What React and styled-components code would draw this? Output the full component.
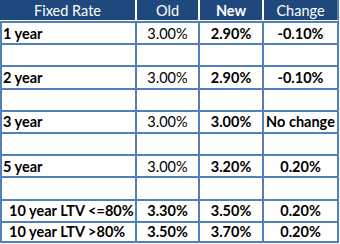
import React from "react";
import styled, { createGlobalStyle } from "styled-components";

const GlobalStyle = createGlobalStyle`
  html, body {
    margin: 0;
    padding: 0;
    background: #ffffff;
  }
  body {
    font-family: Lato, "Open Sans", "Liberation Sans", sans-serif;
  }
`;

const NAVY = "#1F497D";
const LINE = "#4F81BD";

const Table = styled.div`
  display: grid;
  grid-template-columns: 137px 63px 64px 75px;
  grid-template-rows: 21px repeat(10, 22.2px);
  width: 339px;
  font-size: 14.5px;
`;

const HeadCell = styled.div`
  box-sizing: border-box;
  display: flex;
  align-items: center;
  justify-content: center;
  padding-top: 1px;
  background: ${NAVY};
  color: #ffffff;
  font-weight: ${(p) => (p.$bold ? 700 : 400)};
  border-right: 2px solid ${(p) => (p.$last ? LINE : "#ffffff")};
  border-bottom: 1px solid #ffffff;
  white-space: nowrap;
`;

const Cell = styled.div`
  box-sizing: border-box;
  display: flex;
  align-items: center;
  justify-content: ${(p) => (p.$left ? "flex-start" : "center")};
  padding-left: ${(p) => (p.$left ? `${p.$indent || 1}px` : "0")};
  border-top: 2px solid ${LINE};
  border-right: 2px solid ${LINE};
  border-left: ${(p) => (p.$left ? `2px solid ${LINE}` : "none")};
  border-bottom: ${(p) => (p.$end ? `2px solid ${LINE}` : "none")};
  color: #000000;
  font-weight: ${(p) => (p.$regular ? 400 : 700)};
  white-space: nowrap;
  overflow: hidden;
`;

const headers = [
  { label: "Fixed Rate" },
  { label: "Old" },
  { label: "New", bold: true },
  { label: "Change", last: true },
];

// old column regular unless marked bold
const rows = [
  { term: "1 year", old: "3.00%", nw: "2.90%", change: "-0.10%" },
  { term: "", old: "", nw: "", change: "" },
  { term: "2 year", old: "3.00%", nw: "2.90%", change: "-0.10%" },
  { term: "", old: "", nw: "", change: "" },
  { term: "3 year", old: "3.00%", nw: "3.00%", change: "No change" },
  { term: "", old: "", nw: "", change: "" },
  { term: "5 year", old: "3.00%", nw: "3.20%", change: "0.20%" },
  { term: "", old: "", nw: "", change: "" },
  { term: "10 year LTV <=80%", old: "3.30%", nw: "3.50%", change: "0.20%", oldBold: true, indent: 7 },
  { term: "10 year LTV >80%", old: "3.50%", nw: "3.70%", change: "0.20%", oldBold: true, indent: 7 },
];

export default function App() {
  return (
    <>
      <GlobalStyle />
      <Table>
        {headers.map((h) => (
          <HeadCell key={h.label} $bold={h.bold} $last={h.last}>
            {h.label}
          </HeadCell>
        ))}
        {rows.map((r, i) => {
          const end = i === rows.length - 1;
          return (
            <React.Fragment key={i}>
              <Cell $left $indent={r.indent} $end={end}>
                {r.term}
              </Cell>
              <Cell $regular={!r.oldBold} $end={end}>
                {r.old}
              </Cell>
              <Cell $end={end}>{r.nw}</Cell>
              <Cell $end={end}>{r.change}</Cell>
            </React.Fragment>
          );
        })}
      </Table>
    </>
  );
}
